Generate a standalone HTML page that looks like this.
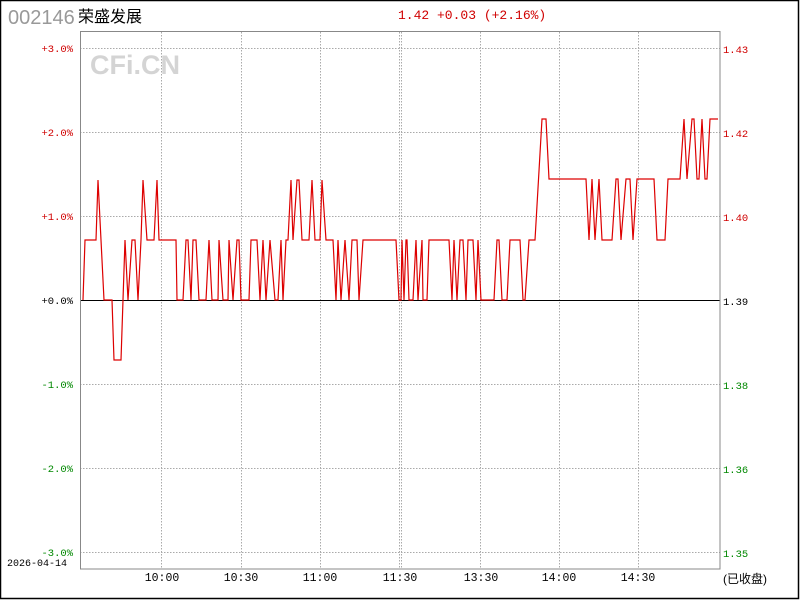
<!DOCTYPE html>
<html><head><meta charset="utf-8"><style>
html,body{margin:0;padding:0;background:#fff;}
body{width:800px;height:600px;position:relative;overflow:hidden;}
.t{position:absolute;white-space:nowrap;}
</style></head><body>
<svg width="800" height="600" style="position:absolute;left:0;top:0" xmlns="http://www.w3.org/2000/svg">
<rect x="0.5" y="0.5" width="798" height="598" fill="none" stroke="#000" stroke-width="1.5"/>
<g font-family="Liberation Sans, Noto Sans CJK SC, sans-serif">
<text x="8" y="24" font-size="20" fill="#999">002146</text>
<text x="78" y="22" font-size="16" fill="#000" font-family="Liberation Sans, Noto Sans CJK SC, sans-serif">荣盛发展</text>
<text x="90" y="74" font-size="27" font-weight="bold" fill="#d4d4d4">CFi.CN</text>
</g>
<text x="398" y="19" font-size="13" fill="#d00000" font-family="Liberation Mono, monospace">1.42 +0.03 (+2.16%)</text>
<g stroke="#aaa" stroke-width="1" stroke-dasharray="1.5,1.5" fill="none">
<line x1="80" y1="48.5" x2="720" y2="48.5"/>
<line x1="80" y1="132.5" x2="720" y2="132.5"/>
<line x1="80" y1="216.5" x2="720" y2="216.5"/>
<line x1="80" y1="384.5" x2="720" y2="384.5"/>
<line x1="80" y1="468.5" x2="720" y2="468.5"/>
<line x1="80" y1="552.5" x2="720" y2="552.5"/>
<line x1="161.5" y1="32" x2="161.5" y2="569"/>
<line x1="241.5" y1="32" x2="241.5" y2="569"/>
<line x1="320.5" y1="32" x2="320.5" y2="569"/>
<line x1="399.5" y1="32" x2="399.5" y2="569"/>
<line x1="401.5" y1="32" x2="401.5" y2="569"/>
<line x1="480.5" y1="32" x2="480.5" y2="569"/>
<line x1="559.5" y1="32" x2="559.5" y2="569"/>
<line x1="638.5" y1="32" x2="638.5" y2="569"/>
</g>
<line x1="80" y1="300.5" x2="720" y2="300.5" stroke="#000" stroke-width="1"/>
<rect x="80.5" y="31.5" width="639.5" height="537.5" fill="none" stroke="#888" stroke-width="1"/>
<polyline fill="none" stroke="#dd0000" stroke-width="1.2" points="83,300 85,240 96,240 98,180 104,300 112,300 114,360 121,360 123,300 125,240 128,300 132,240 135,240 138,300 141,240 143,180 147,240 154,240 157,180 159,240 176,240 177,300 183,300 186,240 188,240 191,300 193,240 196,240 199,300 206,300 209,240 212,300 218,300 219,240 223,300 228,300 229,240 233,300 237,240 239,240 241,300 249,300 251,240 257,240 260,300 263,240 266,300 270,240 275,300 278,300 281,240 283,300 286,240 288,240 291,180 293,240 297,180 299,180 302,240 309,240 312,180 315,240 320,240 322,180 326,240 333,240 336,300 338,240 341,300 345,240 349,300 352,240 357,240 359,300 363,240 396,240 399,300 401,300 402,240 404,300 406,240 407,240 409,300 413,300 416,240 418,300 422,240 423,300 427,300 429,240 449,240 452,300 454,240 457,300 460,240 463,240 466,300 468,240 473,240 476,300 478,240 481,300 494,300 497,240 499,240 502,300 507,300 510,240 520,240 523,300 525,300 529,240 535,240 542,119 546,119 549,179 586,179 589,240 592,179 595,240 599,179 602,240 612,240 616,179 618,179 621,240 626,179 630,179 633,240 637,179 654,179 657,240 665,240 668,179 680,179 684,119 687,179 692,119 694,119 697,179 699,179 702,119 705,179 707,179 710,119 718,119"/>
<g font-family="Liberation Mono, monospace" font-size="10.5">
<g fill="#d00000" text-anchor="end">
<text x="73" y="52">+3.0%</text>
<text x="73" y="136">+2.0%</text>
<text x="73" y="220">+1.0%</text>
</g>
<text x="73" y="304" fill="#000" text-anchor="end">+0.0%</text>
<g fill="#008800" text-anchor="end">
<text x="73" y="388">-1.0%</text>
<text x="73" y="472">-2.0%</text>
<text x="73" y="556">-3.0%</text>
</g>
<g fill="#d00000">
<text x="723" y="53">1.43</text>
<text x="723" y="137">1.42</text>
<text x="723" y="221">1.40</text>
</g>
<text x="723" y="305" fill="#000">1.39</text>
<g fill="#008800">
<text x="723" y="389">1.38</text>
<text x="723" y="473">1.36</text>
<text x="723" y="557">1.35</text>
</g>
<text x="7" y="566" fill="#000" font-size="10">2026-04-14</text>
<g fill="#000" font-size="11.5" text-anchor="middle">
<text x="162" y="581">10:00</text>
<text x="241" y="581">10:30</text>
<text x="320" y="581">11:00</text>
<text x="400" y="581">11:30</text>
<text x="481" y="581">13:30</text>
<text x="559" y="581">14:00</text>
<text x="638" y="581">14:30</text>
</g>
</g>
<text x="723" y="583" font-size="12" fill="#000" font-family="Liberation Sans, Noto Sans CJK SC, sans-serif">(已收盘)</text>
</svg>
</body></html>
